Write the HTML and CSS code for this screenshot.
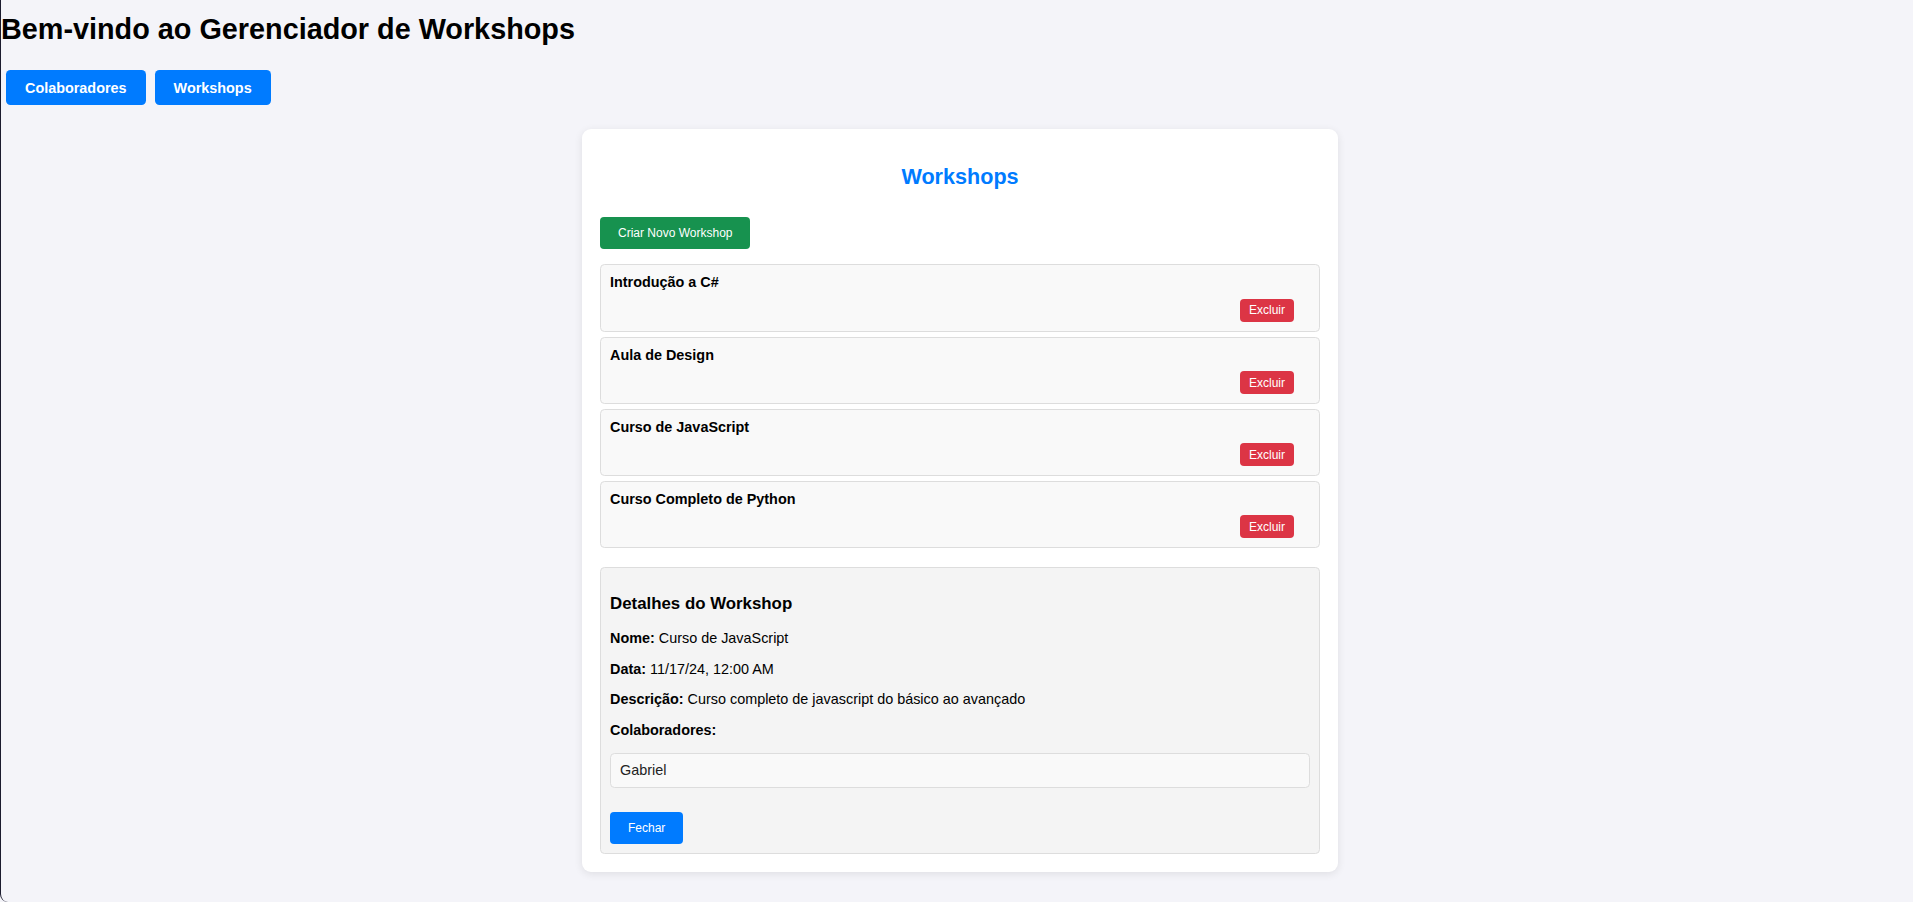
FILE: index.html
```html
<!DOCTYPE html>
<html lang="pt-BR">
<head>
<meta charset="utf-8">
<title>Gerenciador de Workshops</title>
<link rel="stylesheet" href="styles.css">
</head>
<body>
<div class="app">
  <h1 class="page-title">Bem-vindo ao Gerenciador de Workshops</h1>
  <nav class="nav">
    <button class="nav-btn">Colaboradores</button>
    <button class="nav-btn">Workshops</button>
  </nav>
  <main class="main">
    <section class="card">
      <h2 class="card-title">Workshops</h2>
      <button class="btn btn-create">Criar Novo Workshop</button>
      <div class="list">
        <div class="item">
          <div class="item-title">Introdução a C#</div>
          <div class="item-actions"><button class="btn btn-delete">Excluir</button></div>
        </div>
        <div class="item">
          <div class="item-title">Aula de Design</div>
          <div class="item-actions"><button class="btn btn-delete">Excluir</button></div>
        </div>
        <div class="item">
          <div class="item-title">Curso de JavaScript</div>
          <div class="item-actions"><button class="btn btn-delete">Excluir</button></div>
        </div>
        <div class="item">
          <div class="item-title">Curso Completo de Python</div>
          <div class="item-actions"><button class="btn btn-delete">Excluir</button></div>
        </div>
      </div>
      <div class="details">
        <h3 class="details-title">Detalhes do Workshop</h3>
        <p class="field"><strong>Nome:</strong> Curso de JavaScript</p>
        <p class="field"><strong>Data:</strong> 11/17/24, 12:00 AM</p>
        <p class="field"><strong>Descrição:</strong> Curso completo de javascript do básico ao avançado</p>
        <p class="field"><strong>Colaboradores:</strong></p>
        <ul class="collab-list">
          <li class="collab">Gabriel</li>
        </ul>
        <button class="btn btn-close">Fechar</button>
      </div>
    </section>
  </main>
</div>
</body>
</html>
```

FILE: styles.css
```css
html, body {
  margin: 0;
  padding: 0;
}

body {
  background: #f4f4f9;
  font-family: "Liberation Sans", Arial, sans-serif;
  color: #000;
}

.app {
  min-height: 100vh;
  box-sizing: border-box;
  border-left: 1px solid #1b1b2e;
  border-bottom-left-radius: 8px;
  overflow: hidden;
}

.page-title {
  margin: 12.5px 0 0;
  font-size: 28.8px;
  font-weight: bold;
  line-height: normal;
}

.nav {
  display: flex;
  gap: 9px;
  padding-left: 5px;
  margin-top: 24.4px;
}

.nav-btn {
  background: #007bff;
  color: #fff;
  border: none;
  border-radius: 4.5px;
  font-family: "Liberation Sans", Arial, sans-serif;
  font-size: 14.4px;
  font-weight: bold;
  line-height: normal;
  padding: 9.7px 19px;
  cursor: pointer;
}

.main {
  padding-left: 6px;
  margin-top: 24px;
  padding-bottom: 30px;
}

.card {
  width: 756px;
  box-sizing: border-box;
  margin: 0 auto;
  background: #fff;
  border-radius: 9px;
  padding: 18px;
  box-shadow: 0 2px 9px rgba(0, 0, 0, 0.09);
}

.card-title {
  margin: 17.1px 0 27.1px;
  text-align: center;
  color: #007bff;
  font-size: 21.6px;
  font-weight: bold;
  line-height: normal;
}

.btn {
  border: none;
  color: #fff;
  font-family: "Liberation Sans", Arial, sans-serif;
  font-size: 12px;
  line-height: normal;
  cursor: pointer;
  border-radius: 4px;
}

.btn-create {
  display: block;
  background: #17924f;
  padding: 9px 18px;
}

.list {
  margin-top: 15px;
  display: flex;
  flex-direction: column;
  gap: 4.8px;
}

.item {
  background: #f9f9f9;
  border: 1px solid #ddd;
  border-radius: 4.5px;
  padding: 9px;
}

.item-title {
  font-size: 14.4px;
  font-weight: bold;
  line-height: normal;
}

.item-actions {
  display: flex;
  justify-content: flex-end;
  margin-top: 8.4px;
  padding-right: 16px;
}

.btn-delete {
  background: #dc3545;
  padding: 4.5px 9px;
}

.details {
  margin-top: 18.6px;
  background: #f4f4f4;
  border: 1px solid #ddd;
  border-radius: 4.5px;
  padding: 9px;
}

.details-title {
  margin: 16.6px 0 16.85px;
  font-size: 16.85px;
  font-weight: bold;
  line-height: normal;
}

.field {
  margin: 14.4px 0;
  font-size: 14.4px;
  line-height: normal;
}

.details-title + .field {
  margin-top: 0;
}

.collab-list {
  list-style: none;
  margin: 15px 0 24.8px;
  padding: 0;
}

.collab {
  background: #f9f9f9;
  border: 1px solid #ddd;
  border-radius: 4.5px;
  padding: 8.5px 9px;
  font-size: 14.4px;
  line-height: normal;
  color: #222;
}

.btn-close {
  display: block;
  background: #007bff;
  padding: 9px 18px;
}
```
